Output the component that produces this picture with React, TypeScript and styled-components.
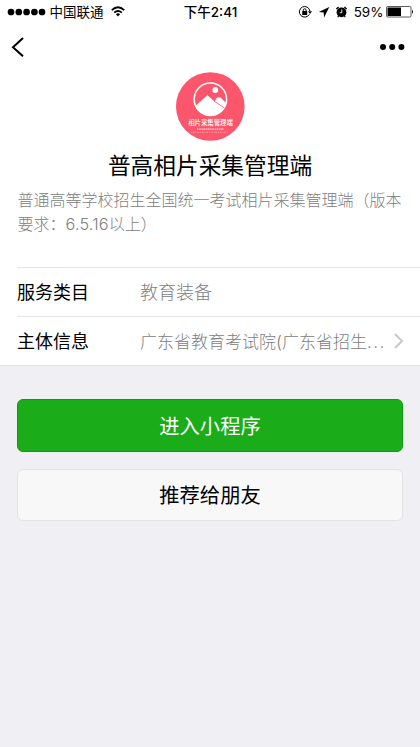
import React from 'react';
import styled, { createGlobalStyle } from 'styled-components';

const GlobalStyle = createGlobalStyle`
  *, *::before, *::after { box-sizing: border-box; }
  body {
    margin: 0;
    background: #efeff4;
    color: #000;
    font-family: Inter, "Noto Sans CJK SC", sans-serif;
  }
`;

const Page = styled.main`
  width: 100%;
  min-height: 747px;
  background: #efeff4;
`;

const Sheet = styled.section`
  height: 366px;
  background: #fff;
  border-bottom: 1px solid #e2e2e5;
  overflow: hidden;
`;

const StatusBar = styled.header`
  display: grid;
  grid-template-columns: 1fr auto 1fr;
  height: 24px;
  padding: 0 6px 0 7px;
  font-size: 13.5px;
  line-height: 24px;
  white-space: nowrap;
`;

const StatusGroup = styled.div<{ $end?: boolean }>`
  display: flex;
  align-items: center;
  justify-content: ${p => (p.$end ? 'flex-end' : 'flex-start')};
  height: 24px;
`;

const Signal = styled.svg`
  width: 39px;
  height: 8px;
  margin-right: 3.5px;
`;

const WifiIcon = styled.svg`
  width: 14px;
  height: 11px;
  margin: 0 0 1px 7px;
`;

const Clock = styled.time`
  font-weight: 500;
  font-size: 13.5px;
`;

const StatusIcon = styled.svg<{ $gap: number }>`
  width: 14px;
  height: 14px;
  margin: 0 ${p => p.$gap}px 1px 0;
`;

const Percent = styled.span`
  font-size: 13.5px;
  margin-right: 2.5px;
`;

const Battery = styled.svg`
  width: 28px;
  height: 12px;
`;

const NavBar = styled.nav`
  display: flex;
  justify-content: space-between;
  align-items: center;
  height: 46px;
  padding: 0 15px 0 11px;
`;

const NavButton = styled.button`
  display: flex;
  padding: 0;
  border: 0;
  background: none;
`;

const Profile = styled.div`
  height: 197px;
  padding: 2px 17px 0;
  display: flex;
  flex-direction: column;
  align-items: center;
`;

const Logo = styled.svg`
  width: 69px;
  height: 69px;
  flex: none;
`;

const Title = styled.h1`
  margin: 8px 0 0;
  font-size: 22.7px;
  font-weight: 400;
  line-height: 34px;
  white-space: nowrap;
`;

const Description = styled.p`
  align-self: stretch;
  margin: 5px 0 0 0.5px;
  color: #808080;
  font-size: 16px;
  font-weight: 300;
  line-height: 24px;
  white-space: nowrap;
`;

const Version = styled.span`
  font-size: 16.3px;
  letter-spacing: 0.15px;
`;

const InfoRow = styled.div`
  display: flex;
  align-items: center;
  height: 49px;
  margin-left: 17px;
  padding: 0 16px 2px 0;
  border-top: 1px solid #e4e4e4;
  white-space: nowrap;
`;

const Label = styled.span`
  width: 123px;
  font-size: 18px;
`;

const Value = styled.span<{ $size: number }>`
  flex: 1;
  color: #808080;
  font-size: ${p => p.$size}px;
  font-weight: 300;
`;

const Ellipsis = styled.span`
  letter-spacing: 1.5px;
`;

const Chevron = styled.svg`
  width: 11px;
  height: 16px;
  margin-top: 2px;
`;

const Actions = styled.div`
  display: flex;
  flex-direction: column;
  gap: 17px;
  padding: 33px 17px 0;
`;

const Action = styled.button<{ $primary?: boolean }>`
  height: ${p => (p.$primary ? 53 : 52)}px;
  padding: 2px 0 0;
  border: 1px solid ${p => (p.$primary ? '#0c9c0e' : '#e3e3e5')};
  border-radius: 6px;
  background: ${p => (p.$primary ? '#1aad19' : '#f8f8f8')};
  color: ${p => (p.$primary ? '#fff' : '#000')};
  font-family: inherit;
  font-size: 20.3px;
  line-height: 30px;
`;

export default function App() {
  return (
    <Page>
      <GlobalStyle />
      <Sheet>
        <StatusBar>
          <StatusGroup>
            <Signal viewBox="0 0 39 8">
              {[4, 11.8, 19.6, 27.4, 35].map(x => <circle key={x} cx={x} cy="4" r="3.35" />)}
            </Signal>
            <span>中国联通</span>
            <WifiIcon viewBox="0 0 14 11" fill="none" stroke="#000" strokeWidth="1.8">
              <path d="M.8 4.2Q7-1.7 13.2 4.2M3.2 6.7Q7 3.2 10.8 6.7" />
              <path d="M4.9 8.2Q7 6.5 9.1 8.2L7 10.4Z" fill="#000" stroke="none" />
            </WifiIcon>
          </StatusGroup>
          <Clock>下午2:41</Clock>
          <StatusGroup $end>
            <StatusIcon $gap={5} viewBox="0 0 14 14" fill="none" stroke="#000">
              <path d="M11.3 9.4A5.3 5.3 0 1 1 11.9 6" />
              <path d="M10 6.3h4L12 9Z" fill="#000" stroke="none" />
              <path d="M5.3 6.5V5.2a1.4 1.4 0 0 1 2.8 0v1.3" />
              <rect x="4.2" y="6" width="5" height="3.9" rx=".5" fill="#000" stroke="none" />
            </StatusIcon>
            <StatusIcon $gap={3} viewBox="0 0 14 14">
              <path d="M12.3 2 1.8 7.1l4.9.4.4 5Z" />
            </StatusIcon>
            <StatusIcon $gap={5.5} viewBox="0 0 14 14">
              <circle cx="7.5" cy="7.3" r="4.9" />
              <path d="m2.3 4 2.3-2.1M10.4 1.9 12.7 4M4.5 11.2l-.7 1M10.5 11.2l.7 1" stroke="#000" strokeWidth="1.3" />
              <path d="M7.8 4.4v3.3H5.7" fill="none" stroke="#fff" strokeWidth=".9" />
            </StatusIcon>
            <Percent>59%</Percent>
            <Battery viewBox="0 0 28 12">
              <rect x=".5" y=".5" width="24.5" height="10.5" rx="1.2" fill="#fff" stroke="#333" strokeWidth=".8" />
              <rect x="1.5" y="1.5" width="13.5" height="8.5" />
              <path d="M26 3.8q2 2 0 4Z" />
            </Battery>
          </StatusGroup>
        </StatusBar>
        <NavBar>
          <NavButton aria-label="返回">
            <svg width="14" height="20" viewBox="0 0 14 20" fill="none" stroke="#000" strokeWidth="2">
              <path d="M12 1 2 10.3 12 19.3" />
            </svg>
          </NavButton>
          <NavButton aria-label="更多">
            <svg width="25" height="8" viewBox="0 0 25 8">
              <circle cx="3" cy="4" r="3" />
              <circle cx="12.2" cy="4" r="3" />
              <circle cx="21.4" cy="4" r="3" />
            </svg>
          </NavButton>
        </NavBar>
        <Profile>
          <Logo viewBox="0 0 69 69">
            <circle cx="34.3" cy="34.5" r="34.3" fill="#fb566b" />
            <path d="M19.2 34 31.5 23.3 38.5 29.5 41 25.5H44.5L50 31C49 38.5 42.5 43.5 34.5 43.5 28 43.5 22 40 19.2 34Z" fill="#fff" />
            <circle cx="34.4" cy="27.2" r="16.2" fill="none" stroke="#fff" strokeWidth="1.5" />
            <circle cx="39.3" cy="18" r="2.9" fill="#fff" />
            <path d="m38 29 10.5 7" stroke="#fb566b" strokeWidth=".8" />
            <text x="34.5" y="53" fill="#fff" fontSize="6.4" fontWeight="500" textAnchor="middle">相片采集管理端</text>
            <path d="M21 57.2h27" stroke="#fff" strokeWidth="1.3" strokeDasharray="1.5 .4 2 .5" opacity=".7" />
            <path d="M15 60.2h38" stroke="#fff" strokeWidth=".7" strokeDasharray="1 .7 2 .8" opacity=".65" />
          </Logo>
          <Title>普高相片采集管理端</Title>
          <Description>
            普通高等学校招生全国统一考试相片采集管理端（版本<br />要求：<Version>6.5.16</Version>以上）
          </Description>
        </Profile>
        <InfoRow>
          <Label>服务类目</Label>
          <Value $size={18}>教育装备</Value>
        </InfoRow>
        <InfoRow>
          <Label>主体信息</Label>
          <Value $size={17}>广东省教育考试院(广东省招生<Ellipsis>...</Ellipsis></Value>
          <Chevron viewBox="0 0 11 16" fill="none" stroke="#c7c7cc" strokeWidth="2">
            <path d="m2 1 7 7-7 7" />
          </Chevron>
        </InfoRow>
      </Sheet>
      <Actions>
        <Action $primary>进入小程序</Action>
        <Action>推荐给朋友</Action>
      </Actions>
    </Page>
  );
}
